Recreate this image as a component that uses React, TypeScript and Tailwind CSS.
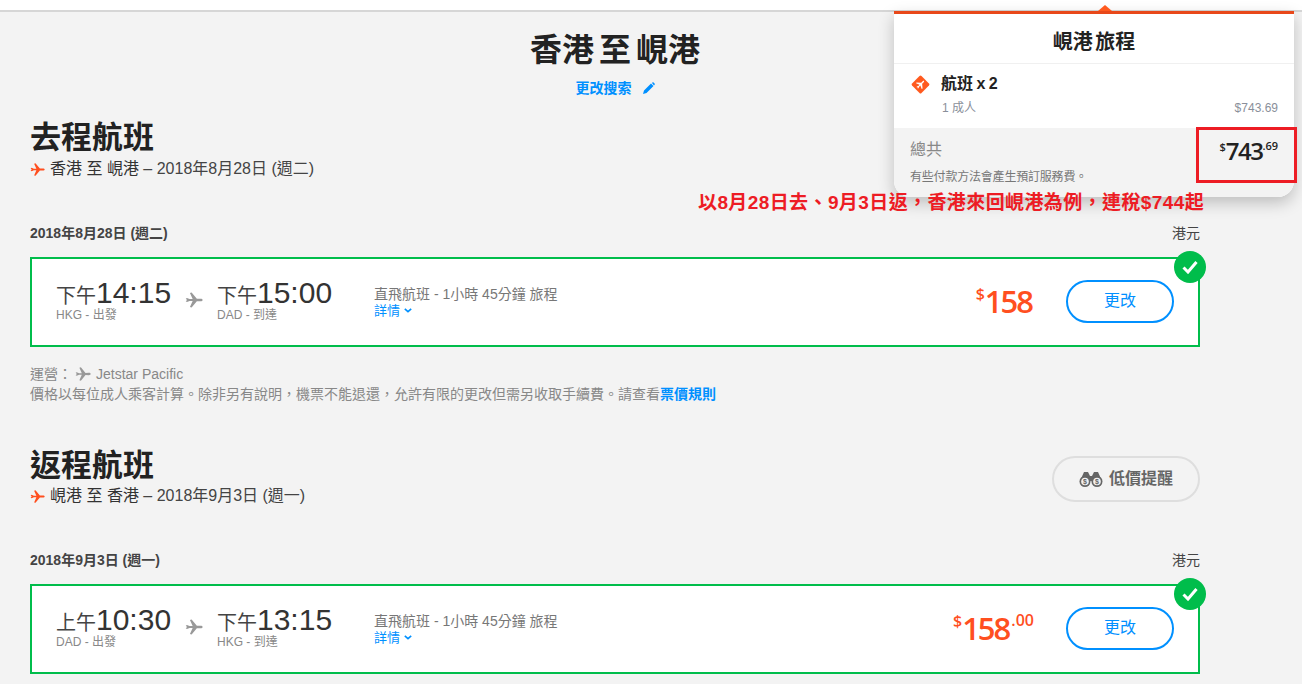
import React from "react";

const font = { fontFamily: '"Liberation Sans","Noto Sans CJK TC",sans-serif' };
const priceFont = { fontFamily: '"Open Sans","Noto Sans CJK TC",sans-serif' };

const planePath = "M1 10.2l1.6-.9 3.6 1.5 4-.1L6.6 2.6 8.8 2l7 8.4 5-.1c1.5 0 2.7.7 2.7 1.7s-1.2 1.7-2.7 1.7l-5-.1-7 8.4-2.2-.6 3.6-8.100-4-.1-3.600 1.500-1.600-.9 1.800-1.800z";

function Plane({ className }: { className: string }) {
  return (
    <svg viewBox="0 0 24 24" className={className} fill="currentColor">
      <path d={planePath} />
    </svg>
  );
}

function Binoculars() {
  return (
    <svg viewBox="0 0 24 16" className="w-6 h-4" fill="#666">
      <path d="M5 1h4l2 4h2l2-4h4l4 9H1z" />
      <circle cx="6" cy="10.500" r="5.500" />
      <circle cx="18" cy="10.500" r="5.500" />
      <circle cx="6" cy="10.500" r="3.800" fill="#f3f3f3" />
      <circle cx="18" cy="10.500" r="3.800" fill="#f3f3f3" />
      <text x="6" y="13" fontSize="7" textAnchor="middle" fill="#666" fontFamily="Liberation Sans">$</text>
      <text x="18" y="13" fontSize="7" textAnchor="middle" fill="#666" fontFamily="Liberation Sans">$</text>
    </svg>
  );
}

function Card({ ap1, t1, from, ap2, t2, to, cents }: { ap1: string; t1: string; from: string; ap2: string; t2: string; to: string; cents?: string }) {
  return (
    <div className="relative h-[90px] border-2 border-[#00bd4b] bg-white flex items-center pl-[24px] pr-[24px]">
      <div className="w-[130px] text-[#333] mb-[5px]">
        <div className="h-[29px] flex items-baseline leading-none whitespace-nowrap">
          <span className="text-[20px] text-[#444]">{ap1}</span>
          <span className="text-[30px]">{t1}</span>
        </div>
        <div className="text-[12px] leading-[14px] text-[#888] mt-[1px]">{from}</div>
      </div>
      <Plane className="w-[18px] h-[18px] text-[#999] -ml-[1px] mr-[14px] mb-[4px]" />
      <div className="w-[157px] text-[#333] mb-[5px]">
        <div className="h-[29px] flex items-baseline leading-none whitespace-nowrap">
          <span className="text-[20px] text-[#444]">{ap2}</span>
          <span className="text-[30px]">{t2}</span>
        </div>
        <div className="text-[12px] leading-[14px] text-[#888] mt-[1px]">{to}</div>
      </div>
      <div className="flex-1 mb-[1px]">
        <div className="text-[14px] leading-[18px] text-[#777]">直飛航班 - 1小時 45分鐘 旅程</div>
        <div className="text-[13px] leading-[16px] text-[#0090ff] flex items-center gap-[4px]">
          詳情
          <svg viewBox="0 0 10 6" className="w-[8px] h-[5px]" fill="none" stroke="currentColor" strokeWidth="2"><path d="M1 1l4 3.500L9 1" /></svg>
        </div>
      </div>
      <div className={cents ? "flex items-start text-[#ff4f1f] font-semibold mr-[32px] mb-[2px]" : "flex items-start text-[#ff4f1f] font-semibold mr-[34px] mb-[2px]"} style={priceFont}>
        <span className="text-[16px] leading-[22px]">$</span>
        <span className="text-[31px] leading-[36px] tracking-[-2px]">158</span>
        {cents && <span className="text-[16px] leading-[20px] ml-[2px]">{cents}</span>}
      </div>
      <div className="w-[108px] h-[43px] mb-[2px] rounded-full border-2 border-[#0090ff] text-[#0090ff] text-[16px] flex items-center justify-center">更改</div>
      <div className="absolute right-[-8px] top-[-8px] w-[32px] h-[32px] rounded-full bg-[#00bd4b] flex items-center justify-center">
        <svg viewBox="0 0 16 14" className="w-[16px] h-[14px]" fill="none" stroke="white" strokeWidth="3"><path d="M1.500 7.500l4.500 4.500L14.500 2" /></svg>
      </div>
    </div>
  );
}

export default function App() {
  return (
    <div className="relative w-[1302px] h-[684px] overflow-hidden bg-[#f3f3f3] text-[#222]" style={font}>
      <div className="h-[12px] bg-white border-b-2 border-[#d6d6d6]" />
      <div className="w-[1170px] ml-[30px]">
        <h1 className="text-[32px] leading-[40px] font-bold text-center mt-[18px] text-[#222] [word-spacing:-4px]">香港 至 峴港</h1>
        <div className="flex justify-center items-center gap-[11px] mt-[9px] text-[14px] leading-[18px] font-bold text-[#0090ff]">
          更改搜索
          <svg viewBox="0 0 12 12" className="w-[12px] h-[12px]" fill="currentColor"><path d="M0 12l1-3.500L8 1.500 10.500 4l-7 7zM9 1l1-1 2 2-1 1.500z" /></svg>
        </div>

        <h2 className="text-[31px] leading-[38px] font-bold mt-[22px] text-[#222]">去程航班</h2>
        <div className="flex items-center gap-[5px] text-[16px] leading-[24px] text-[#444]">
          <Plane className="w-[15px] h-[15px] text-[#ff4f1f]" />
          <span><span className="text-[#333]">香港 至 峴港</span> – 2018年8月28日 (週二)</span>
        </div>
        <div className="flex justify-between items-center mt-[42px] text-[14px] leading-[20px] text-[#444]">
          <span className="font-bold">2018年8月28日 (週二)</span>
          <span>港元</span>
        </div>
        <div className="mt-[14px]">
          <Card ap1="下午" t1="14:15" from="HKG - 出發" ap2="下午" t2="15:00" to="DAD - 到達" />
        </div>
        <div className="mt-[17px] text-[14px] leading-[20px] text-[#888]">
          <div className="flex items-center gap-[5px]">
            運營： <Plane className="w-[16px] h-[16px] text-[#999] -ml-[2px]" /> Jetstar Pacific
          </div>
          <div className="leading-[22px] -mt-[1px]">
            價格以每位成人乘客計算。除非另有說明，機票不能退還，允許有限的更改但需另收取手續費。請查看<span className="font-bold text-[#0090ff]">票價規則</span>
          </div>
        </div>

        <div className="flex justify-between items-start mt-[42px]">
          <div>
            <h2 className="text-[31px] leading-[38px] font-bold text-[#222]">返程航班</h2>
            <div className="flex items-center gap-[5px] text-[16px] leading-[24px] -mt-[1px] text-[#444]">
              <Plane className="w-[15px] h-[15px] text-[#ff4f1f]" />
              <span><span className="text-[#333]">峴港 至 香港</span> – 2018年9月3日 (週一)</span>
            </div>
          </div>
          <div className="w-[148px] h-[46px] mt-[9px] pb-[1px] rounded-full border-2 border-[#dedede] flex items-center justify-center gap-[6px] text-[16px] font-bold text-[#666]">
            <Binoculars />
            低價提醒
          </div>
        </div>
        <div className="flex justify-between items-center mt-[42px] text-[14px] leading-[20px] text-[#444]">
          <span className="font-bold">2018年9月3日 (週一)</span>
          <span>港元</span>
        </div>
        <div className="mt-[14px]">
          <Card ap1="上午" t1="10:30" from="DAD - 出發" ap2="下午" t2="13:15" to="HKG - 到達" cents=".00" />
        </div>
      </div>

      {/* Trip summary dropdown */}
      <div className="absolute left-[894px] top-[11px] w-[400px] h-[186px] bg-white rounded-b-[16px] shadow-[0_6px_16px_rgba(0,0,0,0.22)] border-t-[3px] border-[#e8481a]">
        <div className="absolute left-[204px] top-[-9px] w-0 h-0 border-x-[7px] border-x-transparent border-b-[6px] border-b-[#ff5a1f]" />
        <div className="h-[50px] flex items-center justify-center pt-[7px] text-[20px] font-bold text-[#222] border-b border-[#f0f0f0] [word-spacing:-3px]">峴港 旅程</div>
        <div className="h-[64px] pl-[16px] pr-[16px] pt-[8px] relative">
          <div className="flex items-center gap-[10px]">
            <svg viewBox="0 0 22 22" className="w-[21px] h-[21px]">
              <rect x="4" y="4" width="14" height="14" rx="1.500" transform="rotate(45 11 11)" fill="#ff5a1f" />
              <g transform="translate(11 11) rotate(-45) scale(0.45) translate(-12 -12)"><path d={planePath} fill="white" /></g>
            </svg>
            <span className="text-[16px] leading-[24px] font-bold text-[#222] [word-spacing:-1px]">航班 x 2</span>
          </div>
          <div className="flex justify-between mt-[3px] pl-[32px] text-[12px] leading-[18px] text-[#8a8f9a]">
            <span>1 成人</span>
            <span>$743.69</span>
          </div>
        </div>
        <div className="absolute left-0 right-0 bottom-0 h-[69px] bg-[#f3f3f3] rounded-b-[16px] px-[16px] pt-[10px]">
          <div className="text-[16px] leading-[24px] text-[#888]">總共</div>
          <div className="text-[12px] leading-[18px] text-[#777] mt-[6px] tracking-[-0.2px]">有些付款方法會產生預訂服務費。</div>
          <div className="absolute right-[16px] top-[5px] flex items-start text-[#222] font-semibold" style={priceFont}>
            <span className="text-[11px] leading-[28px]">$</span>
            <span className="text-[24px] leading-[36px] tracking-[-1.5px]">743</span>
            <span className="text-[11px] leading-[26px]">.69</span>
          </div>
        </div>
      </div>
      <div className="absolute left-[1196px] top-[127px] w-[101px] h-[56px] border-[3px] border-[#ed1c24]" />
      <div className="absolute left-[698px] top-[191px] text-[19px] leading-[24px] tracking-[0.4px] font-bold text-[#ed1c24] whitespace-nowrap">以8月28日去、9月3日返，香港來回峴港為例，連稅$744起</div>
    </div>
  );
}
